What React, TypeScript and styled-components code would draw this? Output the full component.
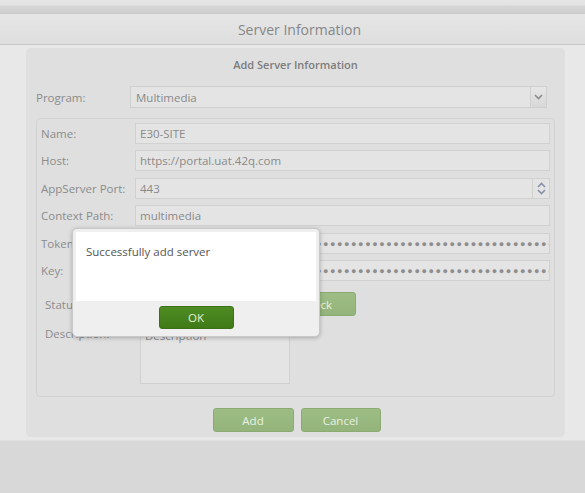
import styled, { createGlobalStyle } from 'styled-components'

const GlobalStyle = createGlobalStyle`
  html, body {
    margin: 0;
    padding: 0;
    background: #d8d8d8;
  }
  body {
    font-family: 'Open Sans', 'Liberation Sans', sans-serif;
    width: 585px;
    height: 493px;
    overflow: hidden;
  }
`

const Page = styled.div`
  position: relative;
  width: 585px;
  height: 493px;
  display: flex;
  flex-direction: column;
  background: #d8d8d8;
`

const TopStrip = styled.div`
  height: 13px;
  flex-shrink: 0;
  background: linear-gradient(#e5e5e5 0, #e3e3e3 5px, #d6d6d6 6px, #cfcfcf 12px);
  border-bottom: 1px solid #c9c9c9;
`

const TitleBar = styled.div`
  height: 30px;
  flex-shrink: 0;
  display: flex;
  align-items: center;
  justify-content: center;
  background: linear-gradient(#e6e6e6, #dedede);
  border-bottom: 1px solid #c6c6c6;
  color: #878787;
  font-size: 14px;
  padding-left: 14px;
`

const Body = styled.div`
  flex-shrink: 0;
  background: #e8e8e8;
  padding: 3px 20px 3px 26px;
  border-bottom: 1px solid #e0e0e0;
`

const Panel = styled.div`
  background: #dfdfdf;
  border-radius: 5px;
  padding: 0 10px 5px 10px;
  display: flex;
  flex-direction: column;
`

const PanelTitle = styled.div`
  height: 30px;
  flex-shrink: 0;
  display: flex;
  align-items: center;
  justify-content: center;
  font-size: 11px;
  font-weight: 600;
  color: #7c7c7c;
  padding-top: 1px;
`

const ProgramRow = styled.div`
  display: flex;
  align-items: center;
  margin-top: 7px;
  height: 22px;
  flex-shrink: 0;
`

const Label = styled.span<{ $width: number }>`
  width: ${({ $width }) => $width}px;
  flex-shrink: 0;
  font-size: 11.5px;
  color: #8c8c8c;
  white-space: nowrap;
`

const Select = styled.div`
  flex: 1;
  height: 20px;
  margin-right: 8px;
  border: 1px solid #cfcfcf;
  background: #e4e4e4;
  display: flex;
  align-items: center;
  font-size: 11.5px;
  color: #8a8a8a;
  padding-left: 5px;
`

const SelectText = styled.span`
  flex: 1;
`

const DropButton = styled.div`
  width: 15px;
  height: 20px;
  border-left: 1px solid #cfcfcf;
  background: linear-gradient(#e6e6e6, #d8d8d8);
  display: flex;
  align-items: center;
  justify-content: center;
`

const Fieldset = styled.div`
  margin-top: 10px;
  height: 279px;
  box-sizing: border-box;
  flex-shrink: 0;
  border: 1px solid #d2d2d2;
  border-radius: 4px;
  padding: 4px 4px 0 4px;
  display: flex;
  flex-direction: column;
  gap: 6.4px;
`

const FieldRow = styled.div`
  display: flex;
  align-items: center;
  height: 21px;
  flex-shrink: 0;
`

const Input = styled.div`
  flex: 1;
  height: 19px;
  border: 1px solid #d1d1d1;
  background: #e4e4e4;
  display: flex;
  align-items: center;
  padding-left: 4px;
  font-size: 11.5px;
  color: #8a8a8a;
  overflow: hidden;
  white-space: nowrap;
`

const InputText = styled.span`
  flex: 1;
`

const Dots = styled.span`
  flex: 1;
  font-size: 9px;
  letter-spacing: 1.6px;
  color: #8e8e8e;
  overflow: hidden;
`

const Spinner = styled.div`
  width: 16px;
  height: 19px;
  border-left: 1px solid #d1d1d1;
  display: flex;
  flex-direction: column;
  align-items: center;
  justify-content: center;
  gap: 1px;
`

const StatusRow = styled.div`
  display: flex;
  align-items: center;
  height: 24px;
  flex-shrink: 0;
  margin-top: 5px;
  padding-left: 4px;
`

const DescRow = styled.div`
  display: flex;
  align-items: flex-start;
  flex-shrink: 0;
  padding-left: 4px;
  margin-top: 3px;
`

const TextArea = styled.div`
  width: 150px;
  height: 58px;
  border: 1px solid #d0d0d0;
  background: #e4e4e4;
  font-size: 11.5px;
  color: #8a8a8a;
  padding: 1px 4px;
  box-sizing: border-box;
  margin-left: 4px;
`

const GreenButton = styled.div<{ $width?: number }>`
  width: ${({ $width }) => $width ?? 79}px;
  height: 24px;
  box-sizing: border-box;
  border: 1px solid #8aaa72;
  border-radius: 3px;
  background: linear-gradient(#9dbd85, #93b47b);
  color: #e9f1e2;
  font-size: 11.5px;
  display: flex;
  align-items: center;
  justify-content: center;
`

const ButtonRow = styled.div`
  display: flex;
  justify-content: center;
  gap: 7px;
  margin-top: 11px;
  padding-left: 2px;
  flex-shrink: 0;
`

const Modal = styled.div`
  position: absolute;
  left: 72px;
  top: 228px;
  width: 248px;
  height: 109px;
  box-sizing: border-box;
  background: #efefef;
  border: 1px solid #c8c8c8;
  border-radius: 5px;
  box-shadow: 0 1px 4px rgba(0, 0, 0, 0.25);
  padding: 3px;
  display: flex;
  flex-direction: column;
`

const ModalContent = styled.div`
  background: #ffffff;
  height: 69px;
  padding: 12px 10px;
  box-sizing: border-box;
  font-size: 11.5px;
  color: #555555;
`

const ModalFooter = styled.div`
  flex: 1;
  display: flex;
  align-items: center;
  justify-content: center;
`

const OkButton = styled.div`
  width: 75px;
  height: 23px;
  box-sizing: border-box;
  border: 1px solid #3b6f18;
  border-radius: 3px;
  background: linear-gradient(#4f8c23, #3f7a17);
  color: #e3f0d8;
  font-size: 11.5px;
  display: flex;
  align-items: center;
  justify-content: center;
  margin-top: 1px;
`

const Chevron = ({ up }: { up?: boolean }) => (
  <svg width="9" height="6" viewBox="0 0 9 6">
    <path
      d={up ? 'M1 5 L4.5 1.5 L8 5' : 'M1 1 L4.5 4.5 L8 1'}
      fill="none"
      stroke="#8590a6"
      strokeWidth="1.6"
    />
  </svg>
)

const fields = [
  { label: 'Name:', value: 'E30-SITE' },
  { label: 'Host:', value: 'https://portal.uat.42q.com' },
  { label: 'AppServer Port:', value: '443', spin: true },
  { label: 'Context Path:', value: 'multimedia' },
  { label: 'Token:', secret: true },
  { label: 'Key:', secret: true },
]

export default function App() {
  return (
    <>
      <GlobalStyle />
      <Page>
        <TopStrip />
        <TitleBar>Server Information</TitleBar>
        <Body>
          <Panel>
            <PanelTitle>Add Server Information</PanelTitle>
            <ProgramRow>
              <Label $width={94}>Program:</Label>
              <Select>
                <SelectText>Multimedia</SelectText>
                <DropButton>
                  <svg width="9" height="6" viewBox="0 0 9 6">
                    <path d="M1 1 L4.5 4.5 L8 1" fill="none" stroke="#8a8a8a" strokeWidth="1.6" />
                  </svg>
                </DropButton>
              </Select>
            </ProgramRow>
            <Fieldset>
              {fields.map((f) => (
                <FieldRow key={f.label}>
                  <Label $width={94}>{f.label}</Label>
                  <Input>
                    {f.secret ? (
                      <Dots>{'●'.repeat(60)}</Dots>
                    ) : (
                      <InputText>{f.value}</InputText>
                    )}
                    {f.spin && (
                      <Spinner>
                        <Chevron up />
                        <Chevron />
                      </Spinner>
                    )}
                  </Input>
                </FieldRow>
              ))}
              <StatusRow>
                <Label $width={231}>Status:</Label>
                <GreenButton $width={80}>Check</GreenButton>
              </StatusRow>
              <DescRow>
                <Label $width={91}>Description:</Label>
                <TextArea>Description</TextArea>
              </DescRow>
            </Fieldset>
            <ButtonRow>
              <GreenButton $width={81}>Add</GreenButton>
              <GreenButton $width={80}>Cancel</GreenButton>
            </ButtonRow>
          </Panel>
        </Body>
        <Modal>
          <ModalContent>Successfully add server</ModalContent>
          <ModalFooter>
            <OkButton>OK</OkButton>
          </ModalFooter>
        </Modal>
      </Page>
    </>
  )
}
